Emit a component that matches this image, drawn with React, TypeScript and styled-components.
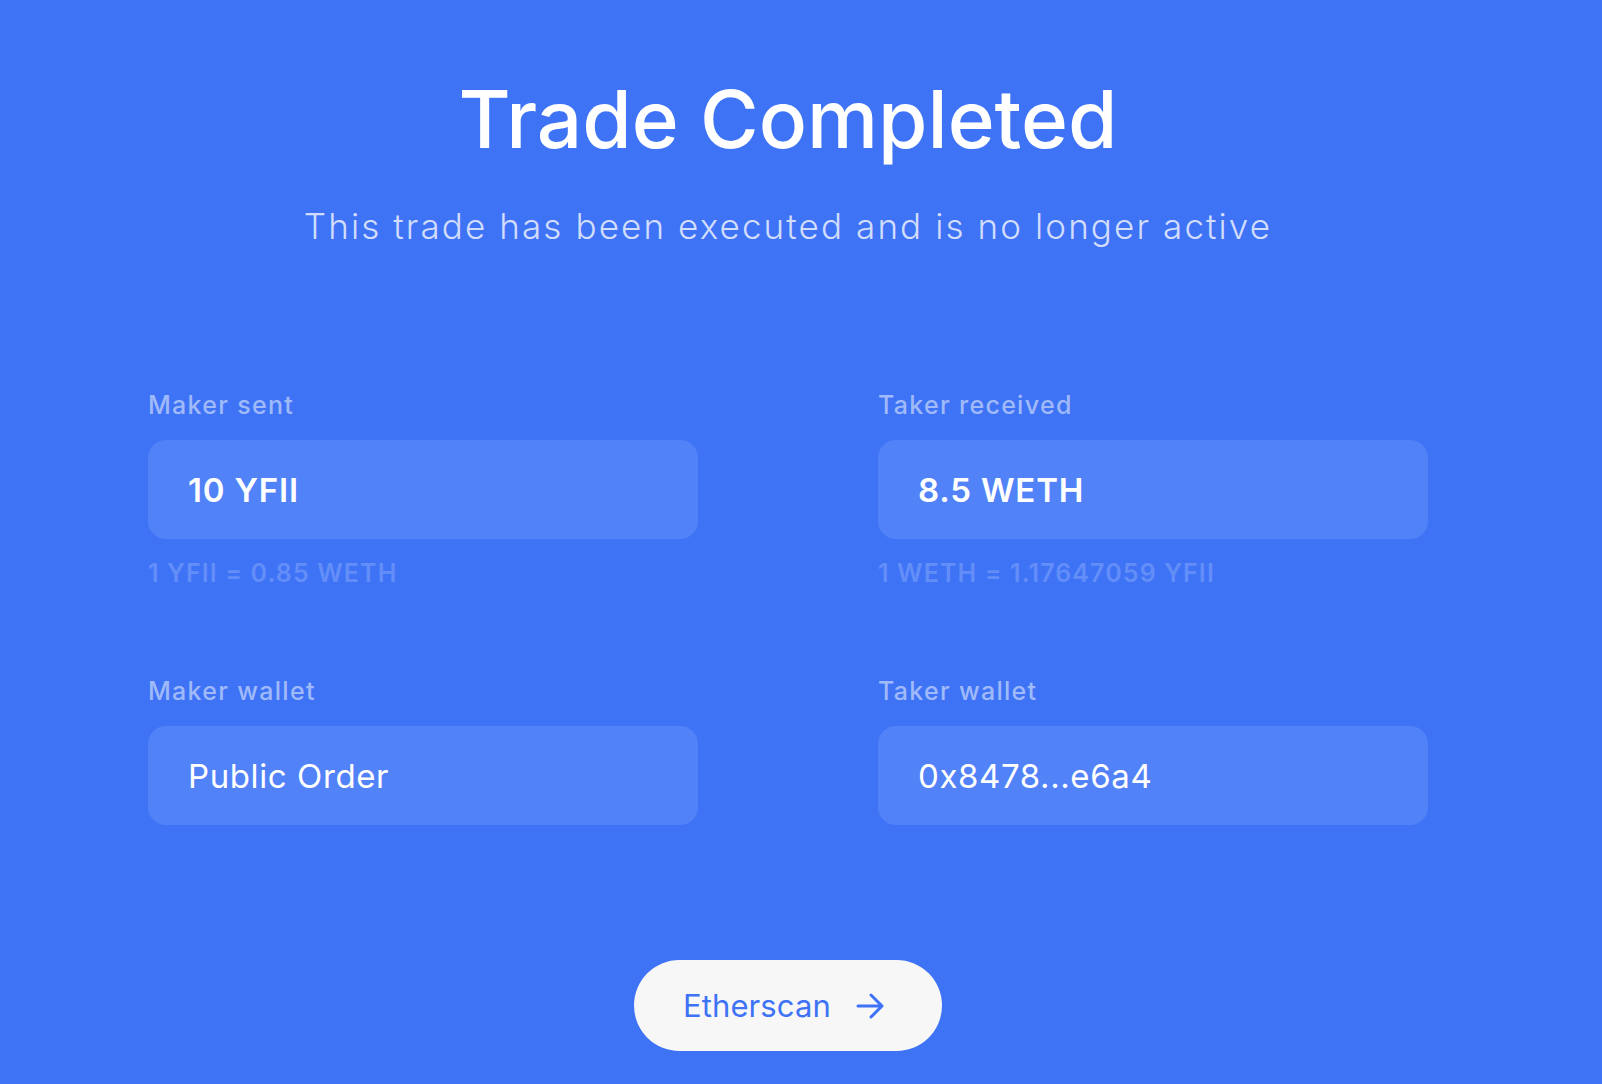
import styled, { createGlobalStyle } from 'styled-components'

const GlobalStyle = createGlobalStyle`
  html, body {
    margin: 0;
    padding: 0;
    background: #3e73f6;
    overflow: hidden;
  }
  body {
    font-family: Inter, 'Noto Sans', sans-serif;
  }
`

const Page = styled.main`
  box-sizing: border-box;
  min-height: 100vh;
  padding: 71px 26px 0 0;
  display: flex;
  flex-direction: column;
  align-items: center;
  background: #3e73f6;
`

const Title = styled.h1`
  margin: 0;
  font-size: 80px;
  line-height: 96px;
  font-weight: 500;
  letter-spacing: 0;
  color: #ffffff;
`

const Subtitle = styled.p`
  margin: 39px 0 0;
  font-size: 35px;
  line-height: 40px;
  font-weight: 300;
  letter-spacing: 2.1px;
  color: #d2ddfc;
`

const Details = styled.section`
  margin-top: 144px;
  width: 1280px;
  display: grid;
  grid-template-columns: 550px 550px;
  column-gap: 180px;
  row-gap: 88px;
`

const Field = styled.div`
  display: flex;
  flex-direction: column;
`

const Label = styled.span`
  font-size: 25px;
  line-height: 30px;
  font-weight: 500;
  letter-spacing: 1.3px;
  color: #a0baf9;
  margin-bottom: 20px;
`

const ValueBox = styled.div<{ bold?: boolean }>`
  box-sizing: border-box;
  height: 99px;
  padding: 0 40px;
  display: flex;
  align-items: center;
  border-radius: 18px;
  background: #5282f8;
  color: #ffffff;
  font-size: 33px;
  font-weight: ${({ bold }) => (bold ? 600 : 400)};
  letter-spacing: ${({ bold }) => (bold ? '0.8px' : '0.6px')};
`

const Rate = styled.span`
  margin-top: 19px;
  font-size: 25px;
  line-height: 30px;
  font-weight: 600;
  letter-spacing: 1.1px;
  color: #638ef8;
`

const Actions = styled.div`
  margin-top: 135px;
  display: flex;
  justify-content: center;
`

const EtherscanButton = styled.button`
  box-sizing: border-box;
  width: 308px;
  height: 91px;
  padding: 0 0 0 49px;
  display: flex;
  align-items: center;
  gap: 25px;
  border: none;
  border-radius: 46px;
  background: #f7f7f8;
  color: #3e73f6;
  font-family: inherit;
  font-size: 31px;
  font-weight: 400;
  letter-spacing: 0.1px;
  cursor: pointer;
`

const ArrowIcon = () => (
  <svg width="28" height="26" viewBox="0 0 28 26" fill="none">
    <path
      d="M2 13H26M15 2L26 13L15 24"
      stroke="currentColor"
      strokeWidth="3"
      strokeLinecap="round"
      strokeLinejoin="round"
    />
  </svg>
)

const fields = [
  { label: 'Maker sent', value: '10 YFII', bold: true, rate: '1 YFII = 0.85 WETH' },
  { label: 'Taker received', value: '8.5 WETH', bold: true, rate: '1 WETH = 1.17647059 YFII' },
  { label: 'Maker wallet', value: 'Public Order', bold: false },
  { label: 'Taker wallet', value: '0x8478...e6a4', bold: false },
]

export default function App() {
  return (
    <>
      <GlobalStyle />
      <Page>
        <Title>Trade Completed</Title>
        <Subtitle>This trade has been executed and is no longer active</Subtitle>
        <Details>
          {fields.map((f) => (
            <Field key={f.label}>
              <Label>{f.label}</Label>
              <ValueBox bold={f.bold}>{f.value}</ValueBox>
              {f.rate && <Rate>{f.rate}</Rate>}
            </Field>
          ))}
        </Details>
        <Actions>
          <EtherscanButton>
            Etherscan
            <ArrowIcon />
          </EtherscanButton>
        </Actions>
      </Page>
    </>
  )
}
